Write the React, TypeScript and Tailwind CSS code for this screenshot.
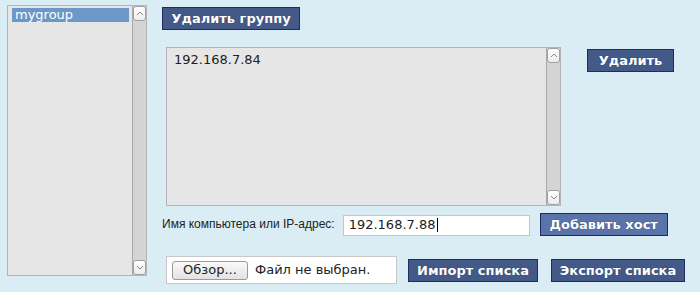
import React from 'react'

function Scrollbar({ className = '' }: { className?: string }) {
  return (
    <div className={`flex flex-col w-[14px] bg-[#d4d4d4] border-l border-[#a8a8a8] ${className}`}>
      <div className="h-[15px] bg-gradient-to-b from-white to-[#ececec] border border-[#a0a0a0] rounded-[3px] flex items-center justify-center">
        <svg width="8" height="5" viewBox="0 0 8 5">
          <path d="M1 4 L4 1 L7 4" fill="none" stroke="#8a8a8a" strokeWidth="1" />
        </svg>
      </div>
      <div className="flex-1" />
      <div className="h-[15px] bg-gradient-to-b from-white to-[#ececec] border border-[#a0a0a0] rounded-[3px] flex items-center justify-center">
        <svg width="8" height="5" viewBox="0 0 8 5">
          <path d="M1 1 L4 4 L7 1" fill="none" stroke="#8a8a8a" strokeWidth="1" />
        </svg>
      </div>
    </div>
  )
}

function Btn({ children, className = '' }: { children: React.ReactNode; className?: string }) {
  return (
    <div
      className={`h-[23px] flex items-center justify-center border border-[#1e2c66] text-white text-[13px] font-bold leading-none [text-shadow:0_0_1px_#2a3560] ${className}`}
      style={{ fontFamily: '"DejaVu Sans", sans-serif' }}
    >
      {children}
    </div>
  )
}

export default function App() {
  return (
    <div
      className="w-[700px] h-[292px] bg-[#daedf4] flex overflow-hidden text-[#222]"
      style={{ fontFamily: '"DejaVu Sans", sans-serif' }}
    >
      {/* group list */}
      <div className="ml-[7px] mt-[5px] w-[140px] h-[271px] border border-[#b4b4b4] bg-[#e6e6e6] flex">
        <div className="flex-1 pt-[2px] pl-[4px] pr-[3px]">
          <div className="h-[14px] bg-[#6b97c9] text-white text-[13px] leading-[13px] pl-[3px]">mygroup</div>
        </div>
        <Scrollbar />
      </div>

      <div className="ml-[15px] flex flex-col">
        <Btn className="mt-[7px] w-[138px] bg-[#435a88]">Удалить группу</Btn>

        <div className="mt-[17px] ml-[4px] flex items-start">
          <div className="w-[395px] h-[159px] border border-[#b4b4b4] bg-[#e6e6e6] flex">
            <div className="flex-1 pl-[7px] pt-[2px] text-[13px]">192.168.7.84</div>
            <Scrollbar />
          </div>
          <Btn className="ml-[26px] mt-[2px] w-[87px] bg-[#435a88]">Удалить</Btn>
        </div>

        <div className="mt-[6px] flex items-center h-[24px]">
          <span className="text-[12px] text-[#222]" style={{ fontFamily: '"Liberation Sans", Arial, sans-serif' }}>
            Имя компьютера или IP-адрес:
          </span>
          <div className="ml-[8px] mt-[2px] w-[187px] h-[21px] bg-white border border-[#c6c6c6] flex items-center pl-[5px] text-[13px]">
            192.168.7.88<span className="inline-block w-px h-[14px] bg-black ml-px" />
          </div>
          <Btn className="ml-[10px] w-[128px] bg-[#5a73aa]">Добавить хост</Btn>
        </div>

        <div className="mt-[20px] ml-[4px] flex items-center">
          <div className="w-[231px] h-[28px] bg-white border border-[#c8c8c8] flex items-center pl-[5px]">
            <div className="w-[76px] h-[19px] border border-[#9a9a9a] rounded-[3px] bg-gradient-to-b from-[#fafafa] to-[#e2e2e2] flex items-center justify-center text-[13px]">
              Обзор...
            </div>
            <span className="ml-[7px] text-[13px]">Файл не выбран.</span>
          </div>
          <Btn className="ml-[11px] w-[130px] bg-[#435a88]">Импорт списка</Btn>
          <Btn className="ml-[13px] w-[134px] bg-[#435a88]">Экспорт списка</Btn>
        </div>
      </div>
    </div>
  )
}
